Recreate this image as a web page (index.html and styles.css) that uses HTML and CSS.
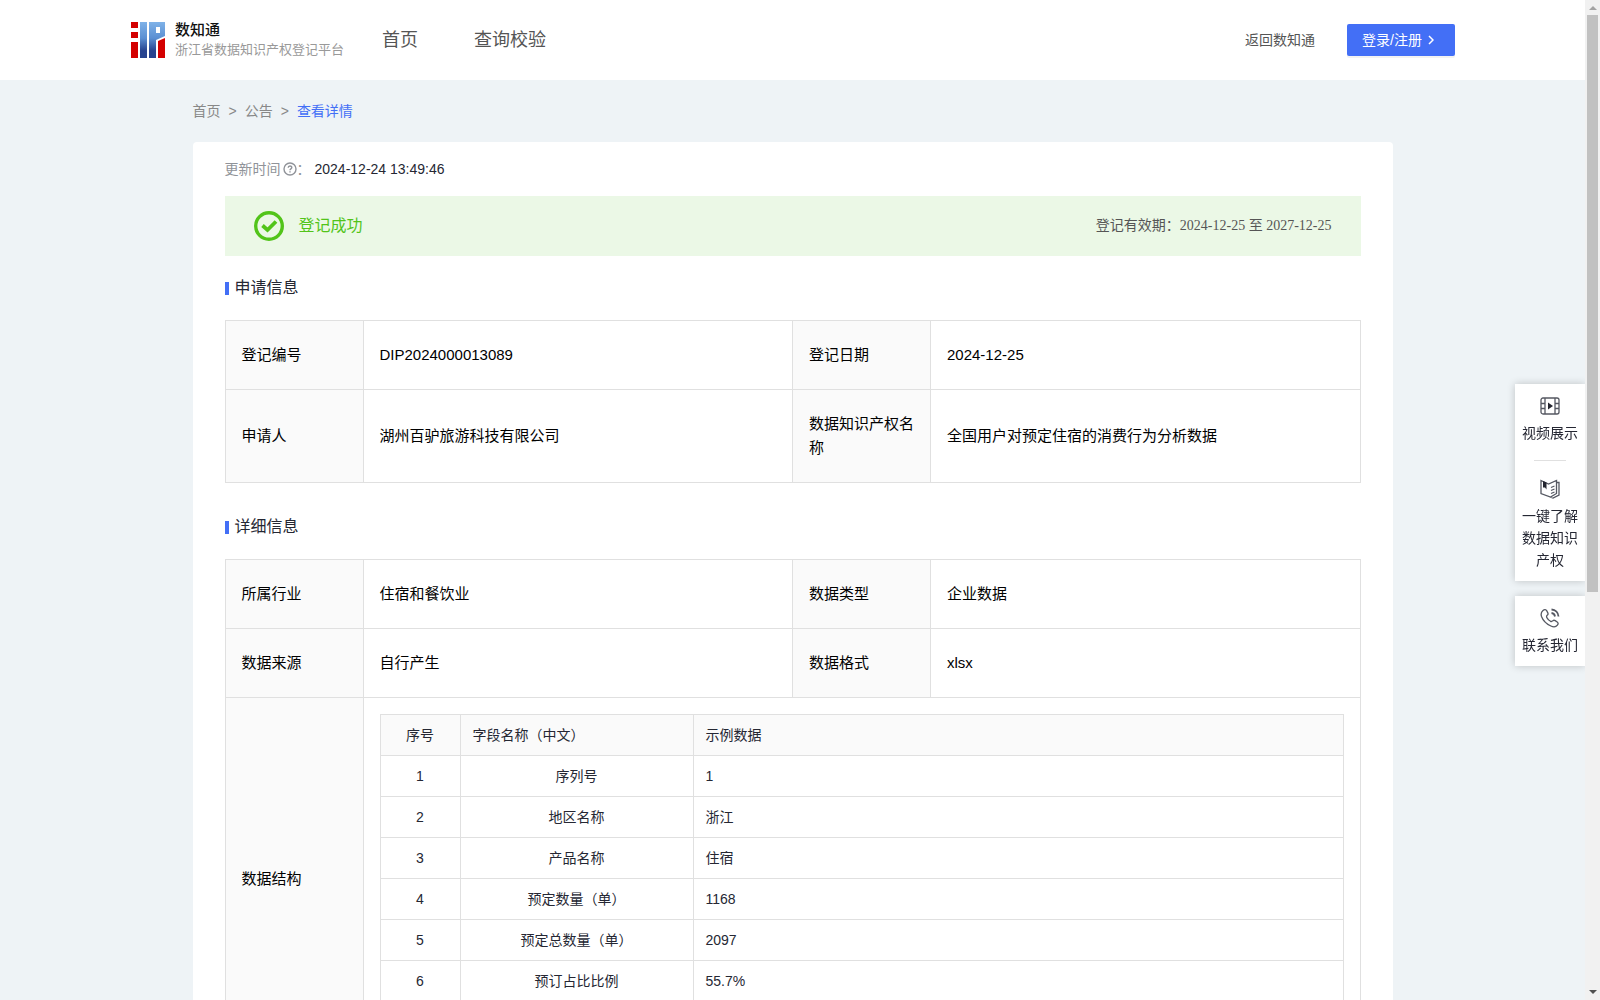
FILE: index.html
```html
<!DOCTYPE html>
<html lang="zh-CN">
<head>
  <meta charset="UTF-8" />
  <meta name="viewport" content="width=device-width, initial-scale=1.0"/>
  <title>浙江省数据知识产权登记平台</title>
  <link rel="stylesheet" href="styles.css">
</head>
<body>
  <div class="page">
    <header class="header">
      <a href="#" class="brand">
        <svg class="logo" width="34" height="36" viewBox="0 0 34 36">
          <defs>
            <linearGradient id="blue" x1="0" y1="0" x2="0" y2="36" gradientUnits="userSpaceOnUse">
              <stop offset="0" stop-color="#7fb2e8"/>
              <stop offset="0.45" stop-color="#5b8fd2"/>
              <stop offset="0.8" stop-color="#27438f"/>
              <stop offset="1" stop-color="#27438f"/>
            </linearGradient>
          </defs>
          <path fill="#d40000" d="M0 0h7v6H0zM0 10h7v6H0zM0 20h7v16H0zM27 19l7-3v20h-7z"/>
          <path fill="url(#blue)" fill-rule="evenodd" d="M9 0h7v36H9zM18 0h16v14l-9 4v18h-7zM25 5v6h4V5z"/>
        </svg>
        <span class="brand-text">
          <strong>数知通</strong>
          <span>浙江省数据知识产权登记平台</span>
        </span>
      </a>
      <nav class="nav">
        <a href="#">首页</a>
        <a href="#">查询校验</a>
      </nav>
      <a href="#" class="back">返回数知通</a>
      <button type="button" class="login">登录/注册
        <svg width="6" height="10" viewBox="0 0 6 10"><path d="M1 1l4 4-4 4" fill="none" stroke="#fff" stroke-width="1.5"/></svg>
      </button>
    </header>

    <main>
      <nav class="breadcrumb">
        <a href="#">首页</a><span>&gt;</span><a href="#">公告</a><span>&gt;</span><a href="#" class="current">查看详情</a>
      </nav>

      <div class="card">
        <p class="updated">
          更新时间<svg width="14" height="14" viewBox="0 0 14 14" fill="none" stroke="#909399" stroke-width="1.4"><circle cx="7" cy="7" r="6"/><path d="M5.2 5.8c0-2.4 3.6-2.4 3.6-.2 0 1.3-1.8 1.3-1.8 2.6M7 9.2v1.3"/></svg>：<time>2024-12-24 13:49:46</time>
        </p>

        <div class="banner">
          <svg width="30" height="30" viewBox="0 0 30 30" fill="none" stroke="#52c41a"><circle cx="15" cy="15" r="13.3" stroke-width="3.4"/><path d="M8.5 14.5l5 4.5 8.5-8.5" stroke-width="3.8"/></svg>
          <span class="status">登记成功</span>
          <span class="validity">登记有效期：2024-12-25 至 2027-12-25</span>
        </div>

        <h2>申请信息</h2>
        <table class="info">
          <tr>
            <th>登记编号</th>
            <td>DIP2024000013089</td>
            <th>登记日期</th>
            <td>2024-12-25</td>
          </tr>
          <tr>
            <th>申请人</th>
            <td>湖州百驴旅游科技有限公司</td>
            <th>数据知识产权名称</th>
            <td>全国用户对预定住宿的消费行为分析数据</td>
          </tr>
        </table>

        <h2>详细信息</h2>
        <table class="info">
          <tr>
            <th>所属行业</th>
            <td>住宿和餐饮业</td>
            <th>数据类型</th>
            <td>企业数据</td>
          </tr>
          <tr>
            <th>数据来源</th>
            <td>自行产生</td>
            <th>数据格式</th>
            <td>xlsx</td>
          </tr>
          <tr>
            <th>数据结构</th>
            <td colspan="3" class="nested">
              <table class="fields">
                <thead>
                  <tr><th>序号</th><th>字段名称（中文）</th><th>示例数据</th></tr>
                </thead>
                <tbody>
                  <tr><td>1</td><td>序列号</td><td>1</td></tr>
                  <tr><td>2</td><td>地区名称</td><td>浙江</td></tr>
                  <tr><td>3</td><td>产品名称</td><td>住宿</td></tr>
                  <tr><td>4</td><td>预定数量（单）</td><td>1168</td></tr>
                  <tr><td>5</td><td>预定总数量（单）</td><td>2097</td></tr>
                  <tr><td>6</td><td>预订占比比例</td><td>55.7%</td></tr>
                  <tr><td></td><td></td><td></td></tr>
                </tbody>
              </table>
            </td>
          </tr>
        </table>
      </div>
    </main>
  </div>

  <aside class="side">
    <div class="side-box">
      <a href="#">
        <svg width="20" height="20" viewBox="0 0 20 20" fill="none" stroke="#555862" stroke-width="1.3"><rect x="1" y="2" width="18" height="16" rx="2"/><path d="M5 2v16M15 2v16M1 7.5h4M1 12.5h4M15 7.5h4M15 12.5h4"/><path d="M8 6.5l5 3.5-5 3.5z" fill="#23252f" stroke="none"/></svg>
        视频展示
      </a>
      <a href="#">
        <svg width="20" height="20" viewBox="0 0 20 20" fill="none" stroke="#555862" stroke-width="1.3"><path d="M1 1.5l7.5 3.5 8-3.5v13l-6 3.5L1 14.5zM16.5 3.5H19v12.5l-6 3-3-1"/><path d="M11 8.5l3.5-1.5M11 11.5l3.5-1.5M11 14.5l3.500-1.500"/><path d="M3 2l3.5 1.5v7L5 8.500 3 8.500z" fill="#23252f" stroke="none"/></svg>
        一键了解数据知识产权
      </a>
    </div>
    <div class="side-box">
      <a href="#">
        <svg width="20" height="20" viewBox="0 0 20 20" fill="none" stroke="#555862" stroke-width="1.3"><path d="M3 2.500c1.500-1.300 3-1 3.800.4l1 2c.5 1 .2 1.800-.6 2.400-1 .8-.8 1.500-.2 2.500.9 1.500 2 2.700 3.500 3.500 1 .5 1.500.3 2.200-.4.8-.8 1.600-.9 2.500-.3l2 1.400c1.200.9 1.200 2 .2 3.200-1.500 1.800-4 2-6.500.8C6.500 16 3 12.500 1.500 8.500.700 6 1.200 4 3 2.500z"/><path d="M11.500 5c1.800.2 3.200 1.600 3.500 3.500M11.500 1.500c4 .2 6.800 3 7 7" stroke-width="1.8"/></svg>
        联系我们
      </a>
    </div>
  </aside>

  <div class="scrollbar">
    <i class="arrow up"></i>
    <div class="thumb"></div>
    <i class="arrow down"></i>
  </div>
</body>
</html>
```
FILE: styles.css
```css
* {
  box-sizing: border-box;
}

body {
  font-family: "Liberation Sans", "Noto Sans CJK SC", sans-serif;
  font-size: 14px;
  line-height: 22px;
  color: #252733;
  background-color: #eef3f6;
  margin: 0;
  height: 100vh;
  overflow: hidden;
}

a {
  color: inherit;
  text-decoration: none;
}

.page {
  margin-right: 15px;
}

/* header */
.header {
  display: flex;
  align-items: center;
  height: 80px;
  padding: 0 130px 0 131px;
  background: #fff;
  color: #555;
}

.brand {
  display: flex;
  align-items: center;
  gap: 10px;
}

.brand-text {
  display: flex;
  flex-direction: column;
  font-size: 13px;
  line-height: 20px;
  color: #999;
}

.brand-text strong {
  font-size: 15px;
  font-weight: 500;
  color: #111;
}

.nav {
  display: flex;
  gap: 56px;
  margin-left: 38px;
  font-size: 18px;
}

.back {
  margin-left: auto;
}

.login {
  display: flex;
  align-items: center;
  gap: 6px;
  width: 108px;
  height: 32px;
  margin-left: 32px;
  padding: 0 15px;
  border: 0;
  border-radius: 2px;
  background: #436ff6;
  box-shadow: 0 2px 0 rgba(0,0,0,0.05);
  color: #fff;
  font: inherit;
  white-space: nowrap;
}

/* content */
main {
  max-width: 1200px;
  margin: 0 auto;
}

.breadcrumb {
  display: flex;
  gap: 8px;
  padding: 20px 0;
  color: #888;
}

.breadcrumb .current {
  color: #436ff6;
}

.card {
  padding: 16px 32px 32px;
  background: #fff;
  border-radius: 4px;
}

.updated {
  display: flex;
  align-items: center;
  margin: 0 0 16px;
  color: #909399;
}

.updated svg {
  margin-left: 2px;
}

.updated time {
  margin-left: 4px;
  color: #252733;
}

.banner {
  display: flex;
  align-items: center;
  height: 60px;
  padding: 0 29px;
  background: #ebf8e6;
}

.status {
  margin-left: 15px;
  font-size: 16px;
  color: #52c41a;
}

.validity {
  margin-left: auto;
  font-family: "Liberation Serif", "Noto Sans CJK SC", serif;
  color: #555;
}

h2 {
  display: flex;
  align-items: center;
  gap: 6px;
  margin: 20px 0;
  font-size: 16px;
  font-weight: 400;
  line-height: 24px;
}

h2::before {
  content: "";
  width: 4px;
  height: 13px;
  background: #436ff6;
}

.info {
  width: 100%;
  table-layout: fixed;
  border-collapse: collapse;
  font-size: 15px;
  line-height: 24px;
  color: #000;
}

.info + h2 {
  margin-top: 32px;
}

.info th,
.info td {
  padding: 22px 16px;
  border: 1px solid #e0e0e0;
  text-align: left;
  font-weight: 400;
}

.info th {
  width: 138px;
  background: #fafafa;
}

.info .nested {
  padding: 16px;
}

.fields {
  width: 100%;
  table-layout: fixed;
  border-collapse: collapse;
  font-size: 14px;
  line-height: 22px;
  color: #252733;
}

.info .fields th,
.info .fields td {
  height: 41px;
  padding: 0 12px;
}

.info .fields th:first-child {
  width: 80px;
}

.info .fields th:nth-child(2) {
  width: 233px;
}

.info .fields th:nth-child(3) {
  width: auto;
}

.info .fields th:first-child,
.info .fields td:first-child,
.info .fields td:nth-child(2) {
  text-align: center;
}

/* floating links */
.side {
  position: fixed;
  top: 384px;
  right: 15px;
  width: 70px;
}

.side-box {
  margin-bottom: 15px;
  padding: 12px 7px 10px;
  background: #fff;
  box-shadow: 0 0 8px rgba(0,0,0,0.2);
}

.side-box a {
  display: flex;
  flex-direction: column;
  align-items: center;
  gap: 6px;
  text-align: center;
}

.side-box a + a::before {
  content: "";
  width: 32px;
  height: 1px;
  margin: 16px 0 12px;
  background: #e0e0e0;
}

/* scrollbar */
.scrollbar {
  position: fixed;
  top: 0;
  right: 0;
  bottom: 0;
  display: flex;
  flex-direction: column;
  align-items: center;
  width: 15px;
  padding: 6px 0;
  background: #f1f1f1;
}

.thumb {
  width: 11px;
  height: 58.4%;
  margin: 5px 0 auto;
  background: #c1c1c1;
}

.arrow {
  border: 4px solid transparent;
}

.arrow.up {
  border-top: 0;
  border-bottom-color: #a3a3a3;
}

.arrow.down {
  border-bottom: 0;
  border-top-color: #505050;
}
```
